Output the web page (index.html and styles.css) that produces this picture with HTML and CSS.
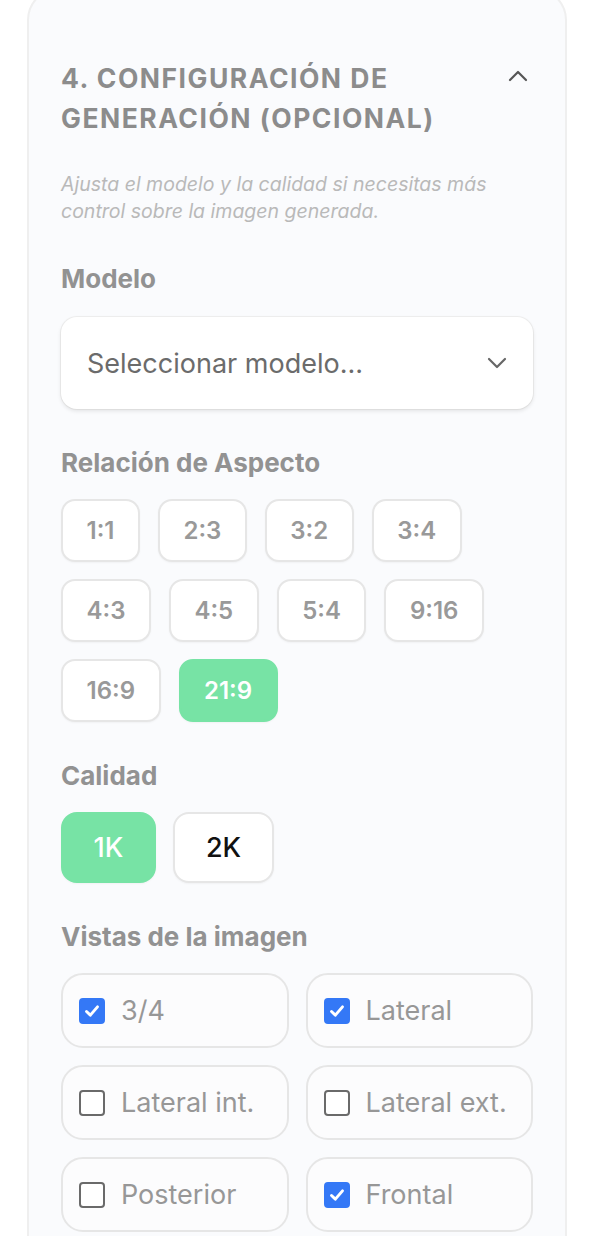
FILE: index.html
```html
<!DOCTYPE html>
<html lang="es">
<head>
<meta charset="utf-8">
<link rel="stylesheet" href="styles.css">
</head>
<body>
<section class="card">
  <header class="card-head">
    <h2 class="card-title">4. Configuración de generación (opcional)</h2>
    <svg class="chev-up" width="20" height="12" viewBox="0 0 20 12"><path d="M2 10 L10 2 L18 10" fill="none" stroke="#555" stroke-width="2.2" stroke-linecap="round" stroke-linejoin="round"/></svg>
  </header>
  <p class="hint">Ajusta el modelo y la calidad si necesitas más control sobre la imagen generada.</p>

  <div class="field">
    <div class="label">Modelo</div>
    <div class="select">
      <span>Seleccionar modelo...</span>
      <svg width="20" height="12" viewBox="0 0 20 12"><path d="M2 2 L10 10 L18 2" fill="none" stroke="#666" stroke-width="2.2" stroke-linecap="round" stroke-linejoin="round"/></svg>
    </div>
  </div>

  <div class="field">
    <div class="label">Relación de Aspecto</div>
    <div class="chips">
      <div class="row"><span class="chip">1:1</span><span class="chip">2:3</span><span class="chip">3:2</span><span class="chip">3:4</span></div>
      <div class="row"><span class="chip">4:3</span><span class="chip">4:5</span><span class="chip">5:4</span><span class="chip">9:16</span></div>
      <div class="row"><span class="chip">16:9</span><span class="chip active">21:9</span></div>
    </div>
  </div>

  <div class="field">
    <div class="label">Calidad</div>
    <div class="row qrow">
      <span class="qchip q1 active">1K</span><span class="qchip q2 dark">2K</span>
    </div>
  </div>

  <div class="field">
    <div class="label">Vistas de la imagen</div>
    <div class="views">
      <label class="view"><span class="box on"><svg viewBox="0 0 24 24"><path d="M6 12.5 L10.2 16.5 L18 7.5" fill="none" stroke="#fff" stroke-width="3.2" stroke-linecap="round" stroke-linejoin="round"/></svg></span>3/4</label>
      <label class="view"><span class="box on"><svg viewBox="0 0 24 24"><path d="M6 12.5 L10.2 16.5 L18 7.5" fill="none" stroke="#fff" stroke-width="3.2" stroke-linecap="round" stroke-linejoin="round"/></svg></span>Lateral</label>
      <label class="view"><span class="box"></span>Lateral int.</label>
      <label class="view"><span class="box"></span>Lateral ext.</label>
      <label class="view"><span class="box"></span>Posterior</label>
      <label class="view"><span class="box on"><svg viewBox="0 0 24 24"><path d="M6 12.5 L10.2 16.5 L18 7.5" fill="none" stroke="#fff" stroke-width="3.2" stroke-linecap="round" stroke-linejoin="round"/></svg></span>Frontal</label>
    </div>
  </div>
</section>
</body>
</html>
```

FILE: styles.css
```css
* { box-sizing: border-box; }
html, body { margin: 0; padding: 0; background: #fff; }
body {
  font-family: Inter, "Noto Sans", sans-serif;
  overflow: hidden;
  height: 1236px;
}
.card {
  margin: -12px 27px 0 27px;
  background: #fafbfd;
  border: 2px solid #efefef;
  border-radius: 32px;
  padding: 68px 32px 40px 32px;
}
.card-head {
  display: flex;
  justify-content: space-between;
  align-items: flex-start;
}
.card-title {
  margin: 0;
  font-size: 26.5px;
  line-height: 40px;
  font-weight: 700;
  letter-spacing: 1.5px;
  text-transform: uppercase;
  color: #8c8c8c;
  width: 430px;
}
.chev-up { margin-top: 12px; margin-right: 5px; }
.hint {
  margin: 33px 0 0 0;
  font-size: 19.5px;
  line-height: 27px;
  font-style: italic;
  color: #b9b9b9;
}
.field { margin-top: 38px; }
.label {
  font-size: 26px;
  line-height: 32px;
  font-weight: 700;
  color: #929292;
  margin-bottom: 20px;
}
.field:first-of-type .label { margin-bottom: 22px; }
.select {
  height: 92px;
  background: #fff;
  border-radius: 16px;
  box-shadow: 0 2px 4px rgba(0,0,0,0.10), 0 0 0 1px #f0f0f0;
  display: flex;
  align-items: center;
  justify-content: space-between;
  padding: 0 26px 0 26px;
  font-size: 27px;
  color: #6b6b6b;
}
.chips { display: flex; flex-direction: column; gap: 17px; }
.row { display: flex; gap: 18px; }
.chip {
  height: 63px;
  padding: 0 23.5px;
  display: inline-flex;
  align-items: center;
  justify-content: center;
  border: 2px solid #e6e6e6;
  border-radius: 14px;
  background: #fff;
  font-size: 24px;
  font-weight: 600;
  color: #999;
  box-shadow: 0 1px 2px rgba(0,0,0,0.04);
}
.chip.active { background: #77e3a5; border-color: #77e3a5; color: #fff; }
.qrow { gap: 17px; }
.qchip {
  height: 71px;
  display: inline-flex;
  align-items: center;
  justify-content: center;
  border: 2px solid #e6e6e6;
  border-radius: 16px;
  background: #fff;
  font-size: 27px;
  font-weight: 500;
  box-shadow: 0 1px 2px rgba(0,0,0,0.04);
}
.q1 { width: 95px; }
.q2 { width: 101px; }
.qchip.active { background: #77e3a5; border-color: #77e3a5; color: #fff; }
.qchip.dark { color: #111; }
.views {
  display: grid;
  grid-template-columns: 1fr 1fr;
  gap: 17px;
}
.view {
  height: 75px;
  border: 2px solid #e6e6e6;
  border-radius: 22px;
  background: #fcfcfd;
  display: flex;
  align-items: center;
  padding-left: 16px;
  font-size: 27px;
  color: #979797;
}
.box {
  width: 26px;
  height: 26px;
  border: 2px solid #6a6a6a;
  border-radius: 4px;
  margin-right: 16px;
  display: inline-flex;
  align-items: center;
  justify-content: center;
  background: #fff;
}
.box.on { background: #3478f6; border-color: #3478f6; }
.box svg { width: 24px; height: 24px; }
```
